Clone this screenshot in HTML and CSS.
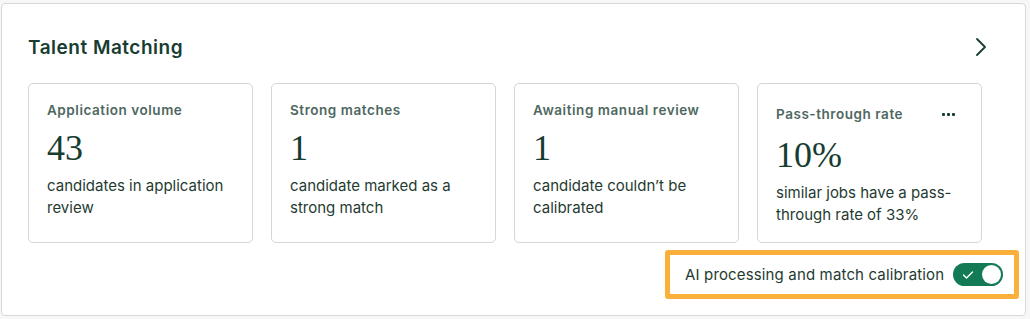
FILE: index.html
```html
<!DOCTYPE html>
<html>
<head>
<meta charset="utf-8">
<link rel="stylesheet" href="styles.css">
</head>
<body>
<section class="panel">
  <header class="panel-head">
    <h2 class="panel-title">Talent Matching</h2>
    <svg class="chevron" width="12" height="20" viewBox="0 0 12 20"><path d="M2 2 L10 10 L2 18" fill="none" stroke="#173d31" stroke-width="1.8" stroke-linecap="round" stroke-linejoin="round"/></svg>
  </header>
  <div class="cards">
    <div class="card">
      <div class="card-head"><span class="card-label">Application volume</span></div>
      <div class="card-num">43</div>
      <p class="card-desc">candidates in application review</p>
    </div>
    <div class="card">
      <div class="card-head"><span class="card-label">Strong matches</span></div>
      <div class="card-num">1</div>
      <p class="card-desc">candidate marked as a strong match</p>
    </div>
    <div class="card">
      <div class="card-head"><span class="card-label">Awaiting manual review</span></div>
      <div class="card-num">1</div>
      <p class="card-desc">candidate couldn’t be calibrated</p>
    </div>
    <div class="card">
      <div class="card-head card-head-menu"><span class="card-label">Pass-through rate</span><span class="dots"><i></i><i></i><i></i></span></div>
      <div class="card-num">10%</div>
      <p class="card-desc">similar jobs have a pass-through rate of 33%</p>
    </div>
  </div>
  <div class="toggle-row">
    <div class="toggle-box">
      <span class="toggle-label">AI processing and match calibration</span>
      <span class="switch">
        <svg class="check" width="12" height="10" viewBox="0 0 12 10"><path d="M1.5 5 L4.5 8 L10.5 2" fill="none" stroke="#ffffff" stroke-width="1.4" stroke-linecap="round" stroke-linejoin="round"/></svg>
        <span class="knob"></span>
      </span>
    </div>
  </div>
</section>
</body>
</html>
```
FILE: styles.css
```css
html, body {
  margin: 0;
  padding: 0;
  background: #f7f7f7;
}
body {
  padding: 3px 4px 4px 1px;
  font-family: Inter, "Liberation Sans", Arial, sans-serif;
  color: #173d31;
}
.panel {
  background: #ffffff;
  border: 1px solid #d6d9d8;
  border-radius: 4px;
  height: 313px;
  box-sizing: border-box;
  padding: 30px 6px 0 26px;
  display: flex;
  flex-direction: column;
}
.panel-head {
  display: flex;
  align-items: center;
  justify-content: space-between;
  height: 26px;
  padding-right: 32px;
}
.panel-title {
  margin: 0;
  font-size: 19px;
  font-weight: 600;
  letter-spacing: 0.5px;
  color: #173d31;
}
.chevron {
  display: block;
}
.cards {
  margin-top: 23px;
  display: grid;
  grid-template-columns: repeat(4, 225px);
  column-gap: 18px;
}
.card {
  border: 1px solid #d3d7d5;
  border-radius: 5px;
  height: 160px;
  box-sizing: border-box;
  padding: 17px 18px 0 18px;
}
.card-head {
  height: 18px;
  display: flex;
  align-items: center;
  justify-content: space-between;
}
.card-head-menu {
  height: 24px;
  margin-top: 1px;
}
.card-label {
  font-size: 13.5px;
  font-weight: 600;
  letter-spacing: 0.55px;
  color: #4e685f;
}
.dots {
  display: flex;
  gap: 2px;
  margin-right: 8px;
}
.dots i {
  width: 3px;
  height: 3px;
  background: #173d31;
  border-radius: 1px;
}
.card-num {
  font-family: "Liberation Serif", "Times New Roman", serif;
  font-size: 36px;
  line-height: 40px;
  margin-top: 9px;
  color: #173d31;
}
.card-desc {
  margin: 7px 0 0 0;
  font-size: 15px;
  line-height: 22px;
  color: #1f3b31;
}
.toggle-row {
  margin-top: 7px;
  display: flex;
  justify-content: flex-end;
}
.toggle-box {
  border: 5px solid #fbb03b;
  border-radius: 3px;
  height: 49px;
  width: 354px;
  box-sizing: border-box;
  display: flex;
  align-items: center;
  padding-left: 15px;
  gap: 9px;
}
.toggle-label {
  font-size: 15px;
  letter-spacing: 0.15px;
  color: #1f3b31;
}
.switch {
  width: 50px;
  height: 23px;
  border-radius: 12px;
  background: #127a55;
  display: flex;
  align-items: center;
  justify-content: space-between;
  padding: 0 2px 0 9px;
  box-sizing: border-box;
}
.check {
  display: block;
}
.knob {
  width: 19px;
  height: 19px;
  border-radius: 50%;
  background: #ffffff;
}
```
